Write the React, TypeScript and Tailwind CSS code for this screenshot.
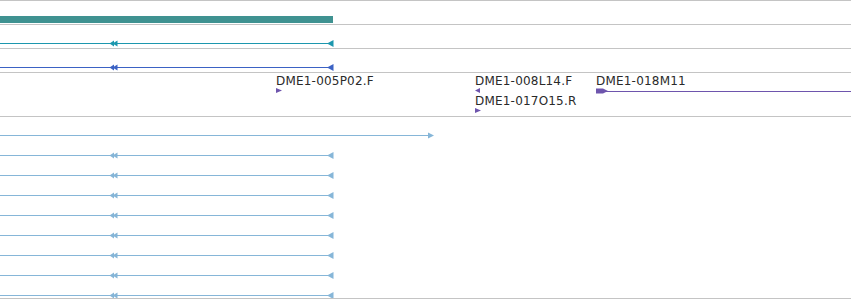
import React from "react";

const W = 851;

function Sep() {
  return <div className="h-px w-full bg-[#c4c4c4]" />;
}

function LeftFeature({ y, color }: { y: number; color: string }) {
  return (
    <g>
      <line x1={0} y1={y + 0.5} x2={333} y2={y + 0.5} stroke={color} strokeWidth={1} />
      <polygon points={`109.5,${y + 0.5} 114,${y - 2.5} 114,${y + 3.5}`} fill={color} />
      <polygon points={`112.5,${y + 0.5} 117.5,${y - 2.5} 117.5,${y + 3.5}`} fill={color} />
      <polygon points={`327,${y + 0.5} 333.5,${y - 3} 333.5,${y + 4}`} fill={color} />
    </g>
  );
}

export default function App() {
  const lb = "#86b6d8";
  const purple = "#6e55ad";
  const rows = [155, 175, 195, 215, 235, 255, 275, 295];
  const label = "absolute text-[12px] leading-[14px] text-[#2a2a2a] tracking-[0.2px]";
  return (
    <div
      className="w-[851px] h-[300px] bg-white overflow-hidden flex flex-col"
      style={{ fontFamily: '"DejaVu Sans", sans-serif' }}
    >
      <Sep />
      <div className="h-[23px] relative">
        <svg width={W} height={23} className="block">
          <rect x={0} y={15} width={333} height={7} fill="#3f9291" />
        </svg>
      </div>
      <Sep />
      <div className="h-[23px]">
        <svg width={W} height={23} className="block">
          <g transform="translate(0,-25)">
            <LeftFeature y={43} color="#1c97ae" />
          </g>
        </svg>
      </div>
      <Sep />
      <div className="h-[23px]">
        <svg width={W} height={23} className="block">
          <g transform="translate(0,-49)">
            <LeftFeature y={67} color="#3b62c4" />
          </g>
        </svg>
      </div>
      <Sep />
      <div className="h-[43px] relative">
        <svg width={W} height={43} className="block absolute left-0 top-0">
          <g transform="translate(0,-73)">
            <polygon points="276,88 282,90.5 276,93" fill={purple} />
            <polygon points="480,88 475,90.5 480,93" fill={purple} />
            <polygon points="475,108 481,110.5 475,113" fill={purple} />
            <line x1={604} y1={91.5} x2={851} y2={91.5} stroke={purple} strokeWidth={1} />
            <polygon points="596,88.5 603,88.5 608,91 603,93.5 596,93.5" fill={purple} />
          </g>
        </svg>
        <span className={`${label} left-[276px] top-[1px]`}>DME1-005P02.F</span>
        <span className={`${label} left-[475px] top-[1px]`}>DME1-008L14.F</span>
        <span className={`${label} left-[475px] top-[21px]`}>DME1-017O15.R</span>
        <span className={`${label} left-[596px] top-[1px]`}>DME1-018M11</span>
      </div>
      <Sep />
      <div className="h-[181px]">
        <svg width={W} height={181} className="block">
          <g transform="translate(0,-117)">
            <line x1={0} y1={135.5} x2={430} y2={135.5} stroke={lb} strokeWidth={1} />
            <polygon points="428,132.5 434,135.5 428,138.5" fill={lb} />
            {rows.map((y) => (
              <LeftFeature key={y} y={y} color={lb} />
            ))}
          </g>
        </svg>
      </div>
      <Sep />
    </div>
  );
}
